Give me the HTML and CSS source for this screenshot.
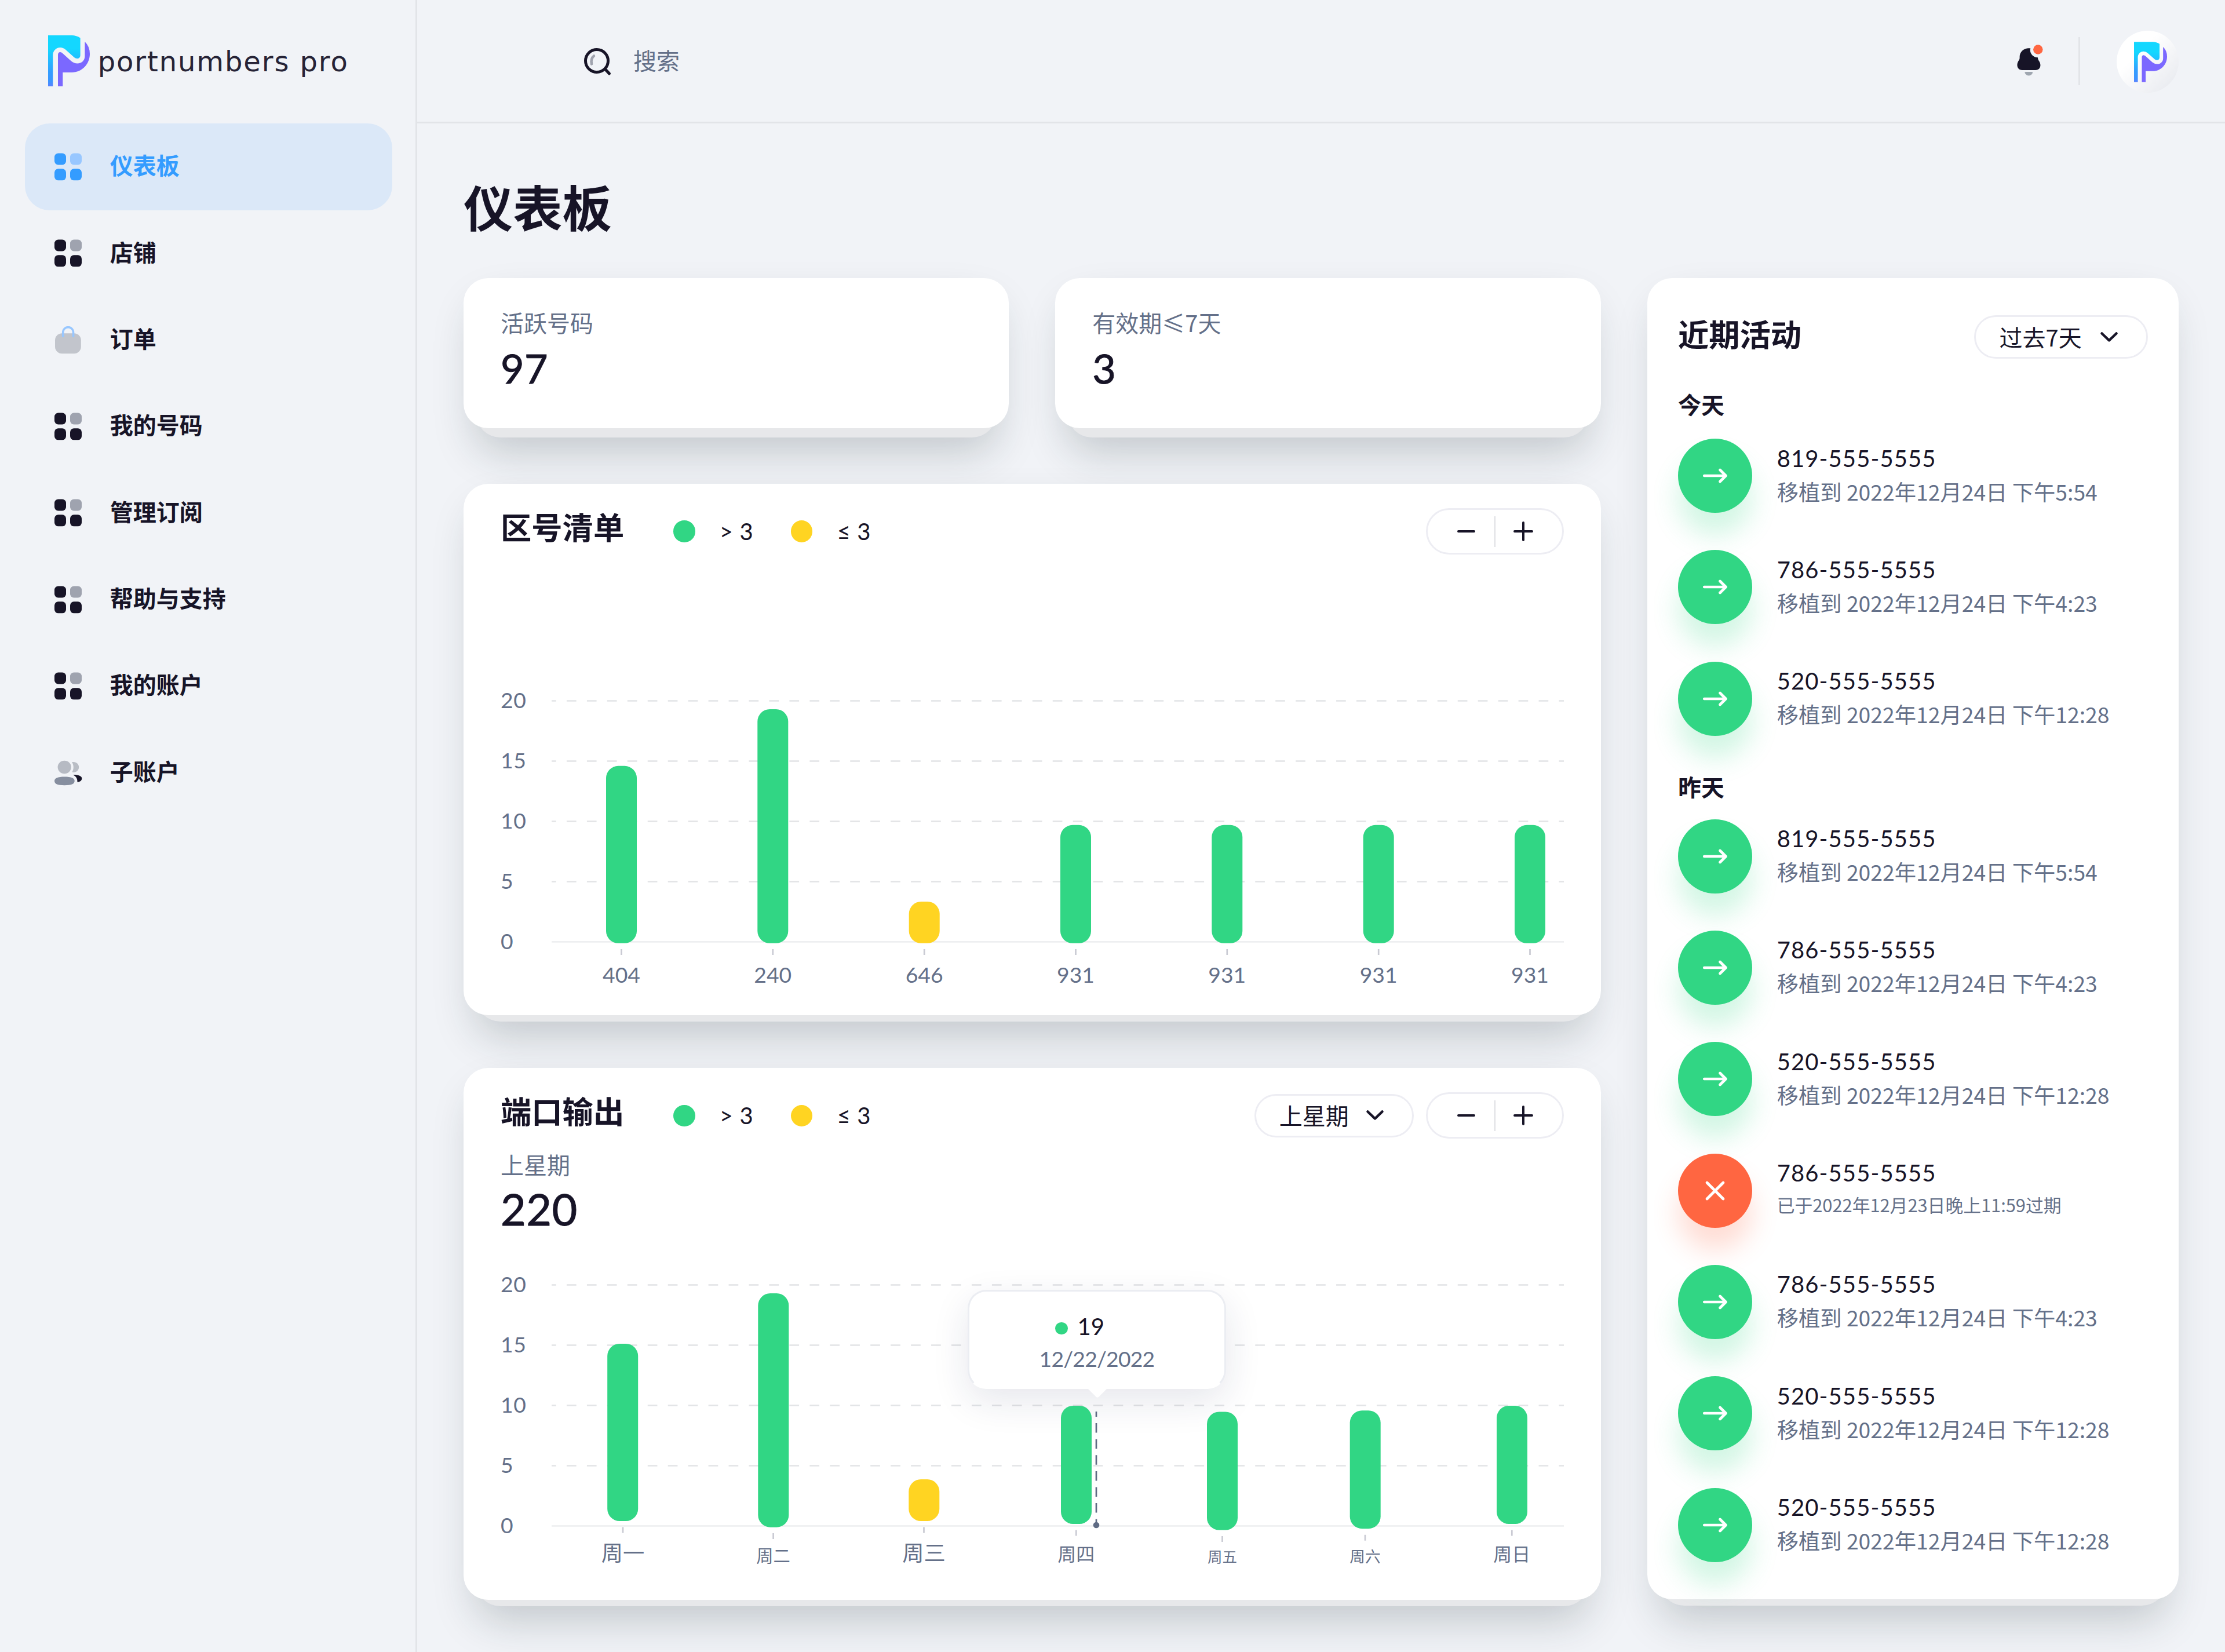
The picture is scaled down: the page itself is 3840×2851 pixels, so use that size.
FILE: index.html
```html
<!DOCTYPE html>
<html lang="zh-CN">
<head>
<meta charset="utf-8">
<title>仪表板 - portnumbers pro</title>
<link rel="stylesheet" href="styles.css">
</head>
<body>
<svg class="defs" width="0" height="0" aria-hidden="true">
  <defs>
    <linearGradient id="logo-blue" x1="0" y1="0" x2="0" y2="1">
      <stop offset=".26" stop-color="#14d7ff"/>
      <stop offset=".72" stop-color="#339dff"/>
      <stop offset=".9" stop-color="#3c95ff"/>
      <stop offset="1" stop-color="#5a82ff"/>
    </linearGradient>
    <symbol id="logo" viewBox="0 0 72 88">
      <path fill="url(#logo-blue)" d="M0 0H41Q49 0 55.6 4.5V34C55.6 38 53.4 40 50 40Q47.4 40 45 38L30 24.6Q26 21 21 21C13.5 21 8.3 27 8.3 34V88H0Z"/>
      <path fill="#7b68ff" d="M17 88V34Q17 29 21 29Q23 29 25 31L40 44.6Q45 48.5 50.5 48.5C58 48.5 63.4 43 63.4 36V11Q72 19 72 32C72 50 58 64 41 64H25.3V88Z"/>
    </symbol>
    <symbol id="tiles" viewBox="0 0 48 48">
      <rect x="0" y="0.5" width="20" height="20" rx="6.5"/>
      <rect class="tile-soft" x="27" y="0.5" width="20" height="20" rx="6.5"/>
      <rect x="0" y="27.3" width="20" height="20" rx="6.5"/>
      <rect x="27" y="27.3" width="20" height="20" rx="6.5"/>
    </symbol>
    <symbol id="arrow" viewBox="0 0 48 48">
      <path d="M5.3 24H42M32.5 14L42.5 24L32.5 34" fill="none" stroke="#fff" stroke-width="4.7" stroke-linecap="round" stroke-linejoin="round"/>
    </symbol>
    <symbol id="cross" viewBox="0 0 48 48">
      <path d="M10 10L38 38M38 10L10 38" fill="none" stroke="#fff" stroke-width="4.7" stroke-linecap="round"/>
    </symbol>
    <symbol id="chevron" viewBox="0 0 32 32">
      <path d="M3.5 9.5L16 21.5L28.5 9.5" fill="none" stroke="#171427" stroke-width="4.5" stroke-linecap="round" stroke-linejoin="round"/>
    </symbol>
    <symbol id="minus" viewBox="0 0 40 40">
      <path d="M7 20H34" fill="none" stroke="#171427" stroke-width="4" stroke-linecap="round"/>
    </symbol>
    <symbol id="plus" viewBox="0 0 40 40">
      <path d="M5 20H35M20 5V35" fill="none" stroke="#171427" stroke-width="4" stroke-linecap="round"/>
    </symbol>
  </defs>
</svg>

<div class="app">
  <aside class="sidebar">
    <div class="brand">
      <svg class="brand-mark"><use href="#logo"/></svg>
      <span class="brand-name">portnumbers pro</span>
    </div>
    <nav class="nav">
      <a class="nav-item active"><svg class="nav-icon"><use href="#tiles"/></svg>仪表板</a>
      <a class="nav-item"><svg class="nav-icon"><use href="#tiles"/></svg>店铺</a>
      <a class="nav-item">
        <svg class="nav-icon" viewBox="0 0 48 48">
          <rect x="1" y="12.3" width="44.8" height="35" rx="12" fill="#c2c5cc"/>
          <path d="M14.7 17.5V10.5A8.9 8.9 0 0 1 32.5 10.5V17.5" fill="none" stroke="#98c7ff" stroke-width="3.6" stroke-linecap="round"/>
        </svg>订单</a>
      <a class="nav-item"><svg class="nav-icon"><use href="#tiles"/></svg>我的号码</a>
      <a class="nav-item"><svg class="nav-icon"><use href="#tiles"/></svg>管理订阅</a>
      <a class="nav-item"><svg class="nav-icon"><use href="#tiles"/></svg>帮助与支持</a>
      <a class="nav-item"><svg class="nav-icon"><use href="#tiles"/></svg>我的账户</a>
      <a class="nav-item">
        <svg class="nav-icon" viewBox="0 0 48 48">
          <ellipse cx="17.2" cy="15" rx="11.6" ry="11.2" fill="#b6bac3"/>
          <path d="M30 6.3C36.5 4.8 42.2 9 42.2 15S36.5 25 30.3 23.6C33.7 18.4 33.7 11.5 30 6.3Z" fill="#b9bdc5"/>
          <path d="M17.2 31.5C29 31.5 34.7 33.5 34.7 38.8S29 46.2 17.2 46.2S0 44 0 38.800S6 31.500 17.200 31.500Z" fill="#868e9f"/>
          <path d="M32 28C42 28 47.300 30.500 47.300 34.500C47.300 38 44.500 40.200 39.500 40.700C39.800 35 37.500 31 32 28Z" fill="#171427"/>
        </svg>子账户</a>
    </nav>
  </aside>

  <div class="page">
    <header class="topbar">
      <label class="search">
        <svg class="search-icon" viewBox="0 0 48 48">
          <circle cx="22" cy="22" r="19.500" fill="none" stroke="#171427" stroke-width="5"/>
          <path d="M37 37L43.500 44" stroke="#171427" stroke-width="5" stroke-linecap="round"/>
          <path d="M17 13.500C12.800 16.700 11.800 21 13 27.500" fill="none" stroke="#a0a3ae" stroke-width="4.500" stroke-linecap="round"/>
        </svg>
        <span>搜索</span>
      </label>
      <svg class="bell" viewBox="0 0 46 56">
        <path transform="translate(0 7)" fill="#171427" d="M23.200 .3C22 .1 20.500 .1 19 .3C11 .9 4.800 7 4.600 15V17C4.600 19 4 20 2.800 21.800C-1.800 28.500 .3 37.900 9 37.900H32C40.500 37.900 42.800 28.500 37.800 22C36.500 20 36 18.800 36 16.300C28.600 16.200 22.800 10.500 22.800 3.500Z"/>
        <path transform="translate(0 7)" fill="#9fa6b0" d="M15.300 41H25.300Q27.800 41.300 27 43Q24.500 47.600 20.300 47.600T13.600 43Q12.800 41.300 15.300 41Z"/>
        <circle cx="36.300" cy="9.500" r="8.200" fill="#ff6641"/>
      </svg>
      <span class="topbar-rule"></span>
      <span class="avatar"><svg class="avatar-mark"><use href="#logo"/></svg></span>
    </header>

    <main class="content">
      <h1 class="page-title">仪表板</h1>
      <div class="columns">
        <div class="left">
          <div class="stats">
            <section class="card stat"><p class="label">活跃号码</p><p class="figure">97</p></section>
            <section class="card stat"><p class="label">有效期≤7天</p><p class="figure">3</p></section>
          </div>

          <section class="card panel">
            <div class="panel-head">
              <h2>区号清单</h2>
              <div class="legend"><span class="key green"></span><span>&gt; 3</span></div>
              <div class="legend"><span class="key yellow"></span><span>≤ 3</span></div>
              <div class="stepper"><svg><use href="#minus"/></svg><i></i><svg><use href="#plus"/></svg></div>
            </div>
            <svg class="chart chart-area" viewBox="0 0 1835 520">
              <g class="grid"><path d="M88 19.500H1835M88 123.500H1835M88 227.500H1835M88 331.500H1835"/></g>
              <path class="base" d="M88 435.500H1835"/>
              <g class="axis">
                <text x="0" y="32">20</text><text x="0" y="136">15</text><text x="0" y="240">10</text><text x="0" y="344">5</text><text x="0" y="448">0</text>
              </g>
              <g class="bars">
                <rect x="182" y="131.800" width="53" height="306" rx="21"/>
                <rect x="443.300" y="34" width="53" height="403.800" rx="21"/>
                <rect class="low" x="704.700" y="366" width="53" height="71.800" rx="21"/>
                <rect x="966" y="233.800" width="53" height="204" rx="21"/>
                <rect x="1227.300" y="233.800" width="53" height="204" rx="21"/>
                <rect x="1488.700" y="233.800" width="53" height="204" rx="21"/>
                <rect x="1750" y="233.800" width="53" height="204" rx="21"/>
              </g>
              <path class="ticks" d="M208.500 448v10M469.800 448v10M731.200 448v10M992.500 448v10M1253.800 448v10M1515.200 448v10M1776.500 448v10"/>
              <g class="names">
                <text x="208.500" y="506">404</text><text x="469.800" y="506">240</text><text x="731.200" y="506">646</text><text x="992.500" y="506">931</text><text x="1253.800" y="506">931</text><text x="1515.200" y="506">931</text><text x="1776.500" y="506">931</text>
              </g>
            </svg>
          </section>

          <section class="card panel">
            <div class="panel-head">
              <h2>端口输出</h2>
              <div class="legend"><span class="key green"></span><span>&gt; 3</span></div>
              <div class="legend"><span class="key yellow"></span><span>≤ 3</span></div>
              <div class="select">上星期<svg><use href="#chevron"/></svg></div>
              <div class="stepper"><svg><use href="#minus"/></svg><i></i><svg><use href="#plus"/></svg></div>
            </div>
            <p class="label">上星期</p>
            <p class="figure large">220</p>
            <div class="chart-wrap">
              <svg class="chart" viewBox="0 0 1835 520">
                <g class="grid"><path d="M88 19.500H1835M88 123.500H1835M88 227.500H1835M88 331.500H1835"/></g>
                <path class="base" d="M88 435.500H1835"/>
                <g class="axis">
                  <text x="0" y="32">20</text><text x="0" y="136">15</text><text x="0" y="240">10</text><text x="0" y="344">5</text><text x="0" y="448">0</text>
                </g>
                <path class="ticks" d="M211 437.500v10M470.600 448v10M730.500 437.500v10M993.300 442.500v10M1245.500 453v10M1492 450.800v10M1745.300 442.500v10"/>
                <g class="names cjk">
                  <text x="211" y="495.500" font-size="37.300">周一</text>
                  <text x="470.600" y="498" font-size="29.300">周二</text>
                  <text x="730.500" y="495.500" font-size="37.300">周三</text>
                  <text x="993.300" y="495.800" font-size="32">周四</text>
                  <text x="1245.500" y="498" font-size="25.500">周五</text>
                  <text x="1492" y="498" font-size="26.700">周六</text>
                  <text x="1745.300" y="495.800" font-size="32">周日</text>
                </g>
              </svg>
              <svg class="chart overlay" viewBox="0 0 1835 520">
                <g class="bars">
                  <rect x="184.200" y="121" width="53" height="306" rx="21"/>
                  <rect x="444.300" y="34" width="53" height="403.700" rx="21"/>
                  <rect class="low" x="704.300" y="355" width="53" height="72" rx="21"/>
                  <rect x="967" y="228" width="53" height="204" rx="21"/>
                  <rect x="1219" y="238.500" width="53" height="204" rx="21"/>
                  <rect x="1465.700" y="236.200" width="53" height="204" rx="21"/>
                  <rect x="1719" y="228" width="53" height="204" rx="21"/>
                </g>
                <path class="cursor" d="M1028 238V433"/>
                <circle cx="1028" cy="434" r="5.300" fill="#5f6b84"/>
              </svg>
              <div class="tooltip">
                <p class="tip-value"><span></span>19</p>
                <p class="tip-date">12/22/2022</p>
                <svg class="tip-arrow" viewBox="0 0 36 18"><path d="M0 0H36L20 16Q18 17.500 16 16Z" fill="#fff"/></svg>
              </div>
            </div>
          </section>
        </div>

        <section class="card activity">
          <div class="activity-head">
            <h2>近期活动</h2>
            <div class="select">过去7天<svg><use href="#chevron"/></svg></div>
          </div>
          <h3>今天</h3>
          <ul>
            <li><span class="badge"><svg><use href="#arrow"/></svg></span><div><b>819-555-5555</b><p>移植到 2022年12月24日 下午5:54</p></div></li>
            <li><span class="badge"><svg><use href="#arrow"/></svg></span><div><b>786-555-5555</b><p>移植到 2022年12月24日 下午4:23</p></div></li>
            <li><span class="badge"><svg><use href="#arrow"/></svg></span><div><b>520-555-5555</b><p>移植到 2022年12月24日 下午12:28</p></div></li>
          </ul>
          <h3 class="earlier">昨天</h3>
          <ul>
            <li><span class="badge"><svg><use href="#arrow"/></svg></span><div><b>819-555-5555</b><p>移植到 2022年12月24日 下午5:54</p></div></li>
            <li><span class="badge"><svg><use href="#arrow"/></svg></span><div><b>786-555-5555</b><p>移植到 2022年12月24日 下午4:23</p></div></li>
            <li><span class="badge"><svg><use href="#arrow"/></svg></span><div><b>520-555-5555</b><p>移植到 2022年12月24日 下午12:28</p></div></li>
            <li><span class="badge expired"><svg><use href="#cross"/></svg></span><div><b>786-555-5555</b><p class="small">已于2022年12月23日晚上11:59过期</p></div></li>
            <li><span class="badge"><svg><use href="#arrow"/></svg></span><div><b>786-555-5555</b><p>移植到 2022年12月24日 下午4:23</p></div></li>
            <li><span class="badge"><svg><use href="#arrow"/></svg></span><div><b>520-555-5555</b><p>移植到 2022年12月24日 下午12:28</p></div></li>
            <li><span class="badge"><svg><use href="#arrow"/></svg></span><div><b>520-555-5555</b><p>移植到 2022年12月24日 下午12:28</p></div></li>
          </ul>
        </section>
      </div>
    </main>
  </div>
</div>
</body>
</html>
```
FILE: styles.css
```css
:root {
  --ink: #171427;
  --muted: #647089;
  --line: #e2e4e8;
  --green: #31d684;
  --yellow: #ffd422;
  --orange: #ff6641;
  --tile-soft: #9fa3af;
  --cjk: "Noto Sans CJK SC", sans-serif;
  --latin: Lato, "Noto Sans CJK SC", sans-serif;
}

* { box-sizing: border-box; }

body, h1, h2, h3, p, ul { margin: 0; padding: 0; }

body {
  background: #f1f3f7;
  color: var(--ink);
  font-family: var(--cjk);
  font-size: 40px;
}

ul { list-style: none; }
svg { display: block; flex: none; }
.defs { position: absolute; }

.app { display: flex; height: 2851px; overflow: hidden; }

/* Sidebar */
.sidebar {
  flex: none;
  width: 720px;
  border-right: 3px solid var(--line);
}

.brand {
  display: flex;
  height: 213.300px;
  padding: 61px 0 0 82.700px;
}

.brand-mark { width: 72px; height: 88px; }

.brand-name {
  margin: 14.500px 0 0 14px;
  color: #262336;
  font: 48px/60px "DejaVu Sans", sans-serif;
  letter-spacing: 1.900px;
  white-space: nowrap;
}

.nav { padding: 0 40px 0 42.700px; }

.nav-item {
  display: flex;
  align-items: center;
  height: 149.330px;
  padding: 0 0 7px 147px;
  border-radius: 42.700px;
  font-weight: 700;
  line-height: 60px;
}

.nav-icon {
  width: 48px;
  height: 48px;
  margin: 7px 48px 0 -96px;
  fill: var(--ink);
}

.tile-soft { fill: var(--tile-soft); }

.nav-item.active { --tile-soft: #98c7ff; background: #dbe8f8; color: #349cff; }
.nav-item.active .nav-icon { fill: #349cff; }

/* Top bar */
.page { flex: 1; min-width: 0; }

.topbar {
  display: flex;
  align-items: center;
  height: 213px;
  padding: 3px 80px 0 0;
  border-bottom: 3px solid var(--line);
}

.search {
  display: flex;
  align-items: center;
  margin: 0 auto 3px 288px;
  color: var(--muted);
  line-height: 60px;
}

.search-icon { width: 48px; height: 48px; margin: 4px 37px 0 0; }
.search span { margin-bottom: 4px; }
.bell { width: 46px; height: 56px; margin: 0 60px 5px 0; }
.topbar-rule { width: 3px; height: 83px; margin: 0 63px 2px 0; background: var(--line); }

.avatar {
  display: flex;
  width: 107px;
  height: 107px;
  padding: 19px 0 0 30px;
  border-radius: 50%;
  background: linear-gradient(135deg, #fff 35%, #e9ebf0 90%);
}

.avatar-mark { width: 57px; height: 70px; }

/* Content */
.content { padding: 80px 80px 0; isolation: isolate; }

.page-title {
  height: 187px;
  font-size: 85.300px;
  line-height: 124px;
}

.columns { display: flex; gap: 80px; }
.left { width: 1962.700px; }

.card {
  position: relative;
  border-radius: 42.700px;
  background: #fff;
}

.card::after {
  content: "";
  position: absolute;
  z-index: -1;
  inset: 21px 21px -11px;
  border-radius: 42.700px;
  background: #e7e8ea;
  box-shadow: 0 24px 72px rgba(28, 44, 48, .22);
}

.stats { display: grid; grid-template-columns: 1fr 1fr; gap: 80px; }
.stat { height: 259px; padding: 46px 64px 0; }
.stat::after { bottom: -16px; }

.label { color: var(--muted); line-height: 60px; }

.figure {
  margin-top: 9px;
  font: 70px/80px var(--latin);
  letter-spacing: .5px;
  -webkit-text-stroke: 1px var(--ink);
}

.figure.large { font-size: 75.500px; }

.panel { height: 917.300px; padding: 42px 64px 0; }
.stats + .panel { margin: 96px 0 91px; }

.panel-head { display: flex; align-items: center; height: 80px; }

h2 { font-size: 53.300px; line-height: 80px; }
.panel-head h2 { margin: 0 85.300px 18px 0; }

.legend {
  display: flex;
  align-items: center;
  gap: 42px;
  width: 202.700px;
  font: 40px/50px var(--latin);
  letter-spacing: .7px;
}

.key { width: 37.300px; height: 37.300px; border-radius: 50%; }
.key.green { background: var(--green); }
.key.yellow { background: var(--yellow); }

.select {
  display: flex;
  align-items: center;
  height: 75px;
  padding: 0 48px 2px 40px;
  border: 3px solid #ededf3;
  border-radius: 38px;
  line-height: 60px;
}

.select svg { width: 32px; height: 32px; margin: 2px 0 0 29px; }
.activity .select svg { margin-left: 31px; }
.panel-head .select { margin-left: auto; }
.panel-head .select + .stepper { margin-left: 21px; }

.stepper {
  display: flex;
  align-items: center;
  width: 238px;
  height: 80px;
  margin-left: auto;
  padding-left: 46px;
  border: 3px solid #ededf3;
  border-radius: 40px;
}

.stepper svg { width: 40px; height: 40px; }
.stepper i { width: 2.700px; height: 53px; margin: 0 28px 0 29px; background: #dfe0e4; }

/* Charts */
.chart { width: 1835px; height: 520px; overflow: visible; }
.chart-area { margin-top: 233px; }

.grid path {
  fill: none;
  stroke: #e2e4e6;
  stroke-width: 2.700;
  stroke-dasharray: 16.700 18.250;
  stroke-dashoffset: 9;
}

.base { stroke: #e6e7ea; stroke-width: 2; }
.axis text, .names text { fill: var(--muted); font-family: var(--latin); }
.axis, .names { font-size: 37.300px; }
.axis { letter-spacing: .6px; }
.names { text-anchor: middle; }
.names.cjk text { font-family: var(--cjk); }
.bars rect { fill: var(--green); }
.bars rect.low { fill: var(--yellow); }
.ticks { stroke: #c9cad3; stroke-width: 2.700; }
.cursor { stroke: #5f6b84; stroke-width: 2.700; stroke-dasharray: 16.500 11.100; stroke-dashoffset: 7.500; }

.panel .label { margin-top: 14px; }
.panel .figure { margin-top: 7px; }
.chart-wrap { position: relative; margin-top: 72px; }
.overlay { position: absolute; inset: 0; z-index: 1; }

/* Floats over the plot, above the hovered day */
.tooltip {
  position: absolute;
  left: 806px;
  top: 28px;
  width: 446px;
  height: 171px;
  padding-top: 34px;
  border: 3px solid #ebedf2;
  border-bottom-color: #fff;
  border-radius: 32px;
  background: #fff;
  box-shadow: 0 21px 64px rgba(30, 40, 80, .11);
  font-family: var(--latin);
  text-align: center;
}

.tip-value {
  display: flex;
  align-items: center;
  height: 52px;
  padding-left: 148px;
  font-size: 40px;
}

.tip-value span {
  width: 21.500px;
  height: 21.500px;
  margin: 6px 17px 0 0;
  border-radius: 50%;
  background: var(--green);
}

.tip-date { color: var(--muted); font-size: 37.300px; line-height: 60px; letter-spacing: -.8px; }
.tip-arrow { position: absolute; left: 203px; top: 166px; width: 36px; height: 18px; }

/* Recent activity */
.activity { width: 917.300px; height: 2280px; padding: 64px 53.300px; }
.activity-head { display: flex; align-items: center; justify-content: space-between; height: 75px; }
.activity-head h2 { margin-bottom: 14px; }

h3 { margin: 48px 0 30px; font-size: 40px; line-height: 60px; }
h3.earlier { margin: 57px 0 27px; }

.activity ul { display: grid; gap: 64.330px; }
.activity li { display: flex; height: 128px; gap: 42.700px; }

.badge {
  display: flex;
  align-items: center;
  justify-content: center;
  width: 128px;
  height: 128px;
  border-radius: 50%;
  background: var(--green);
  box-shadow: 0 38px 45px rgba(49, 214, 132, .22);
}

.badge.expired { background: var(--orange); box-shadow: 0 38px 45px rgba(255, 102, 65, .22); }
.badge svg { width: 48px; height: 48px; }

.activity li div { padding-top: 6.500px; }
.activity b { display: block; font: 40px/54px var(--latin); letter-spacing: 1.100px; }
.activity li p { margin-top: 3px; color: var(--muted); font-size: 37.300px; line-height: 54px; white-space: nowrap; }
.activity li p.small { margin-top: 1px; font-size: 30.800px; }
```
